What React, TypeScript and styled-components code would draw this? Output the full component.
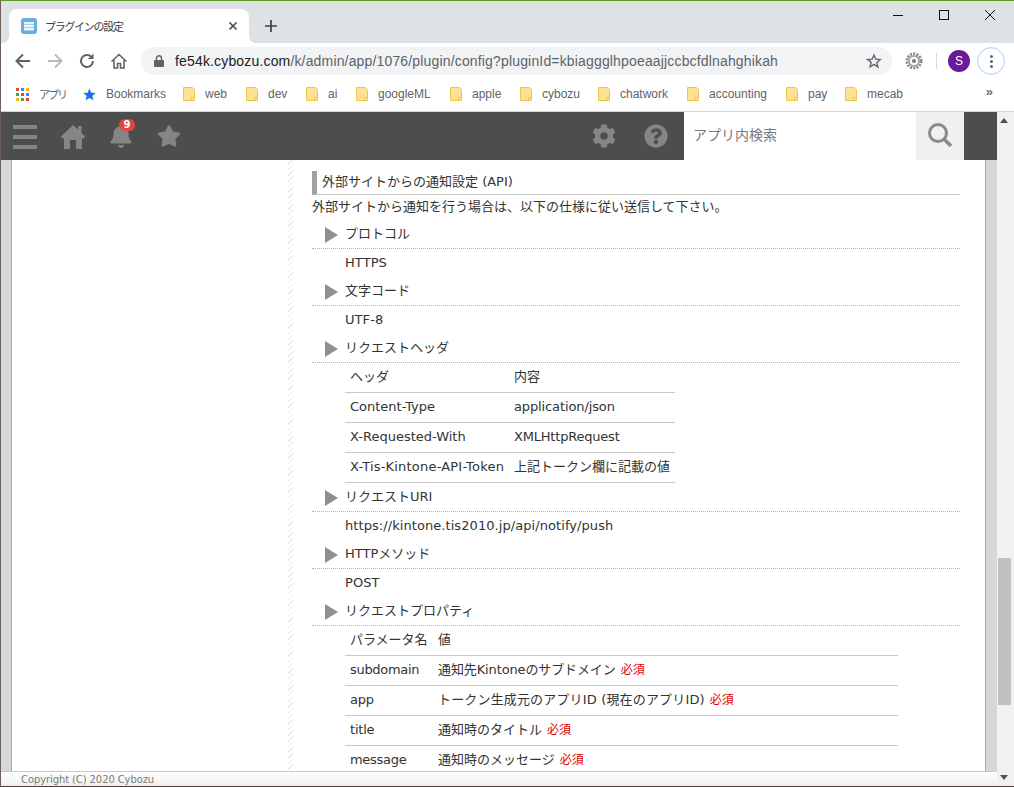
import * as React from 'react'
import styled, {createGlobalStyle} from 'styled-components'
import {FaBell, FaCog, FaQuestionCircle, FaStar} from 'react-icons/fa'

const GlobalStyle = createGlobalStyle`
  html, body {
    margin: 0;
    padding: 0;
    height: 100%;
    overflow: hidden;
    background: #fff;
  }
  * {
    box-sizing: border-box;
  }
`

const uiFont = `"Liberation Sans", "Noto Sans CJK JP", sans-serif`
const pageFont = `"DejaVu Sans", "Noto Sans CJK JP", sans-serif`

const Window = styled.div`
  width: 1014px;
  height: 787px;
  display: flex;
  flex-direction: column;
  overflow: hidden;
  border-top: 1px solid #5c9a1e;
  border-left: 1px solid #6e5f58;
  border-bottom: 1px solid #4a3f3c;
  font-family: ${uiFont};
`

const TabStrip = styled.div`
  height: 42px;
  flex: none;
  display: flex;
  align-items: flex-end;
  padding: 0 1px 0 8px;
  background: #dee1e6;
`

const Tab = styled.div`
  position: relative;
  width: 240px;
  height: 34px;
  display: flex;
  align-items: center;
  padding: 0 10px 0 12px;
  background: #fff;
  border-radius: 8px 8px 0 0;
  font-size: 12px;
  color: #3c4043;

  &::before,
  &::after {
    content: '';
    position: absolute;
    bottom: 0;
    width: 6px;
    height: 6px;
  }
  &::before {
    left: -6px;
    background: radial-gradient(circle at 0 0, transparent 5.5px, #fff 6px);
  }
  &::after {
    right: -6px;
    background: radial-gradient(circle at 100% 0, transparent 5.5px, #fff 6px);
  }
`

const TabIcon = styled.svg`
  width: 16px;
  height: 16px;
  margin-right: 8px;
  flex: none;
`

const TabTitle = styled.span`
  flex: 1;
  font-size: 11px;
  letter-spacing: -1.3px;
`

const TabClose = styled.svg`
  width: 10px;
  height: 10px;
  margin-right: 1px;
`

const NewTab = styled.svg`
  width: 12px;
  height: 12px;
  margin: 0 0 11px 16px;
`

const WindowButtons = styled.div`
  margin-left: auto;
  align-self: flex-start;
  display: flex;
`

const WindowButton = styled.svg`
  width: 46px;
  height: 29px;
`

const Toolbar = styled.div`
  height: 32px;
  flex: none;
  display: flex;
  align-items: center;
  background: #fff;
  padding: 4px 0 0 13px;
`

const NavIcon = styled.svg`
  width: 18px;
  height: 18px;
  margin-right: 14px;
  flex: none;
`

const Omnibox = styled.div`
  width: 751px;
  height: 28px;
  margin-left: -1px;
  display: flex;
  align-items: center;
  padding: 0 10px 0 13px;
  background: #f1f3f4;
  border-radius: 14px;
  font-size: 14px;
  color: #5f6368;
  letter-spacing: 0.16px;
`

const LockIcon = styled.svg`
  width: 10px;
  height: 12px;
  margin-right: 11px;
  flex: none;
`

const Url = styled.span`
  flex: 1;
`

const UrlHost = styled.span`
  color: #202124;
`

const StarIcon = styled.svg`
  width: 16px;
  height: 16px;
`

const ExtIcon = styled.svg`
  width: 18px;
  height: 18px;
  margin-left: 13px;
  flex: none;
`

const Divider = styled.div`
  width: 1px;
  height: 16px;
  margin-left: 13px;
  background: #d7d9dc;
`

const Avatar = styled.div`
  width: 22px;
  height: 22px;
  margin-left: 11px;
  border-radius: 50%;
  background: #6a1b9a;
  color: #fff;
  font-size: 12px;
  display: flex;
  align-items: center;
  justify-content: center;
`

const MenuButton = styled.div`
  width: 28px;
  height: 28px;
  margin-left: 7px;
  border: 1px solid #bcd6f7;
  box-shadow: inset 0 0 0 0.5px #d8e6fa;
  border-radius: 50%;
  display: flex;
  flex-direction: column;
  align-items: center;
  justify-content: center;
  gap: 2px;
`

const MenuDot = styled.span`
  width: 3px;
  height: 3px;
  border-radius: 50%;
  background: #5f6368;
`

const BookmarkBar = styled.div`
  height: 37px;
  flex: none;
  display: flex;
  align-items: center;
  padding-top: 2px;
  background: #fff;
  border-bottom: 1px solid #d0d2d4;
  font-size: 12px;
  color: #5f6368;
`

const Bookmark = styled.div<{$width: number}>`
  width: ${p => p.$width}px;
  flex: none;
  display: flex;
  align-items: center;
  gap: 10px;
  white-space: nowrap;
`

const AppsLabel = styled.span`
  font-size: 11px;
  letter-spacing: -2px;
`

const AppsGrid = styled.svg`
  width: 13px;
  height: 13px;
  margin-left: 15px;
  flex: none;
`

const BookmarkStar = styled.svg`
  width: 13px;
  height: 13px;
  flex: none;
`

const FolderIcon = styled.svg`
  width: 12px;
  height: 14px;
  flex: none;
`

const Chevrons = styled.span`
  margin-left: auto;
  padding: 0 21px 6px 0;
  font-size: 13px;
  font-weight: bold;
  color: #6a6d70;
`

const Body = styled.div`
  flex: 1;
  min-height: 0;
  display: flex;
`

const Page = styled.div`
  width: 996px;
  display: flex;
  flex-direction: column;
`

const AppHeader = styled.div`
  height: 48px;
  flex: none;
  display: flex;
  align-items: center;
  background: #4d4d4d;
  color: #858585;
`

const Hamburger = styled.div`
  width: 24px;
  height: 24px;
  margin: 2px 0 0 12px;
  display: flex;
  flex-direction: column;
  justify-content: space-between;
`

const HamburgerBar = styled.span`
  height: 4px;
  background: #858585;
`

const HeaderIcon = styled.span<{$left: number}>`
  position: relative;
  display: flex;
  margin-left: ${p => p.$left}px;
  font-size: 24px;
`

const HomeIcon = styled.svg`
  width: 24px;
  height: 24px;
  margin-top: 2px;
  fill: #858585;
`

const Badge = styled.span`
  position: absolute;
  top: -5px;
  left: 10px;
  width: 16px;
  height: 12px;
  border-radius: 6px;
  background: #e8463c;
  color: #fff;
  font: bold 10px/12px "DejaVu Sans", sans-serif;
  text-align: center;
`

const Search = styled.div`
  width: 232px;
  height: 48px;
  margin-left: 16px;
  display: flex;
  align-items: center;
  padding: 0 0 5px 9px;
  background: #fff;
  font: 14px ${pageFont};
  color: #7a7a7a;
`

const SearchButton = styled.div`
  width: 48px;
  height: 48px;
  display: flex;
  align-items: center;
  justify-content: center;
  background: #f0f0f0;
`

const SearchGlyph = styled.svg`
  width: 24px;
  height: 24px;
  margin-bottom: 2px;
`

const Content = styled.div`
  flex: 1;
  min-height: 0;
  display: flex;
  overflow: hidden;
  background: #d6d7d9;
  padding: 0 11px 0 10px;
`

const Panel = styled.div`
  flex: 1;
  display: flex;
  background: #fff;
  border-left: 1px solid #a9a9a9;
  border-right: 1px solid #a9a9a9;
  overflow: hidden;
`

const Sidebar = styled.div`
  width: 276px;
  flex: none;
`

const Hatch = styled.div`
  width: 5px;
  flex: none;
  background: repeating-linear-gradient(-45deg, #e9e9e9 0 1px, #fff 1px 4px);
`

const Main = styled.div`
  width: 648px;
  margin-left: 19px;
  flex: none;
  padding-top: 11px;
  font: 13px/18px ${pageFont};
  color: #333;
`

const Title = styled.div`
  height: 24px;
  display: flex;
  align-items: center;
  padding: 0 0 2px 5px;
  border-left: 5px solid #a0a0a0;
  border-bottom: 1px solid #c9c9c4;
`

const Intro = styled.div`
  height: 25px;
  line-height: 24px;
`

const SectionHead = styled.div`
  height: 29px;
  display: flex;
  align-items: center;
  padding: 0 0 1px 13px;
  border-bottom: 1px dotted #b5b5b5;
`

const Arrow = styled.span`
  width: 0;
  height: 0;
  margin: 2px 7px 0 0;
  border-style: solid;
  border-width: 8px 0 8px 13px;
  border-color: transparent transparent transparent #8f8f8f;
`

const Value = styled.div`
  height: 28px;
  line-height: 28px;
  padding-left: 33px;
  letter-spacing: 0.07px;
`

const Table = styled.table<{$width: number}>`
  width: ${p => p.$width}px;
  margin-left: 33px;
  border-collapse: separate;
  border-spacing: 0;
  table-layout: fixed;
`

const Cell = styled.td<{$track?: number}>`
  height: 30px;
  padding: 0 0 1px 5px;
  border-bottom: 1px solid #c8c8c8;
  white-space: nowrap;
  letter-spacing: ${p => p.$track ?? 0}px;
`

const Required = styled.span`
  margin-left: 5px;
  font-size: 12px;
  letter-spacing: 0;
  color: #e00000;
`

const Footer = styled.div`
  height: 15px;
  flex: none;
  padding-left: 20px;
  border-top: 1px solid #c9c9c9;
  background: linear-gradient(#fff, #efefef);
  font: 10px/16px ${pageFont};
  letter-spacing: -0.1px;
  color: #7b7b7b;
`

const Scrollbar = styled.div`
  width: 17px;
  flex: none;
  display: flex;
  flex-direction: column;
  align-items: center;
  background: #f1f1f1;
`

const ScrollArrow = styled.span<{$down?: boolean}>`
  width: 0;
  height: 0;
  margin: ${p => (p.$down ? '0 3px 0 0' : '6px 3px 0 0')};
  border-style: solid;
  border-width: ${p => (p.$down ? '5px 4px 0' : '0 4px 5px')};
  border-color: ${p =>
    p.$down ? '#505050 transparent transparent' : 'transparent transparent #505050'};
`

const ScrollThumb = styled.div`
  width: 13px;
  height: 147px;
  margin: 435px 3px auto 0;
  background: #c1c1c1;
`

const ScrollEnd = styled.div`
  height: 6px;
`

const folders: Array<[string, number]> = [
  ['web', 63],
  ['dev', 60],
  ['ai', 50],
  ['googleML', 94],
  ['apple', 70],
  ['cybozu', 78],
  ['chatwork', 89],
  ['accounting', 99],
  ['pay', 59],
  ['mecab', 100],
]

const Folder = () => (
  <FolderIcon viewBox="0 0 12 14">
    <path d="M.5.5h9l2 2v11H.5z" fill="#fde293" stroke="#f0c648" />
    <path d="M8.5 13.5v-3h3" fill="none" stroke="#f0c648" />
  </FolderIcon>
)

const Section = ({title, children}: {title: string; children: React.ReactNode}) => (
  <>
    <SectionHead>
      <Arrow />
      {title}
    </SectionHead>
    {children}
  </>
)

// name, value, then the letter spacing each needs to land on the same width
const headerRows: Array<[string, string, number, number]> = [
  ['Content-Type', 'application/json', 0, -0.12],
  ['X-Requested-With', 'XMLHttpRequest', 0, -0.2],
  ['X-Tis-Kintone-API-Token', '上記トークン欄に記載の値', 0.2, 0],
]

const propRows: Array<[string, string, number, number]> = [
  ['subdomain', '通知先Kintoneのサブドメイン', -0.3, -0.12],
  ['app', 'トークン生成元のアプリID (現在のアプリID)', -0.2, 0.16],
  ['title', '通知時のタイトル', -0.2, 0],
  ['message', '通知時のメッセージ', -0.3, 0],
]

export default function App() {
  return (
    <Window>
      <GlobalStyle />
      <TabStrip>
        <Tab>
          <TabIcon viewBox="0 0 16 16">
            <rect width="16" height="16" rx="3" fill="#6aaede" />
            <path d="M3 4h10v2.4H3zM3 7h10v2.4H3zM3 10h10v2.4H3z" fill="#fff" opacity=".85" />
          </TabIcon>
          <TabTitle>プラグインの設定</TabTitle>
          <TabClose viewBox="0 0 10 10">
            <path d="M1.5 1.5l7 7M8.5 1.5l-7 7" stroke="#45484c" strokeWidth="1.6" />
          </TabClose>
        </Tab>
        <NewTab viewBox="0 0 12 12">
          <path d="M6 0v12M0 6h12" stroke="#3c4043" strokeWidth="1.7" />
        </NewTab>
        <WindowButtons>
          <WindowButton viewBox="0 0 46 29">
            <path d="M18 14.5h10" stroke="#111" />
          </WindowButton>
          <WindowButton viewBox="0 0 46 29">
            <rect x="18.5" y="9.5" width="9" height="9" fill="none" stroke="#111" />
          </WindowButton>
          <WindowButton viewBox="0 0 46 29">
            <path d="M18 9l10 10M28 9L18 19" stroke="#111" />
          </WindowButton>
        </WindowButtons>
      </TabStrip>
      <Toolbar>
        <NavIcon viewBox="0 0 18 18">
          <path d="M16 9H3M9 2.5L2.5 9 9 15.5" fill="none" stroke="#5f6368" strokeWidth="2" />
        </NavIcon>
        <NavIcon viewBox="0 0 18 18">
          <path d="M2 9h13M9 2.5L15.5 9 9 15.5" fill="none" stroke="#b8babc" strokeWidth="2" />
        </NavIcon>
        <NavIcon viewBox="0 0 18 18">
          <path d="M15 9a6 6 0 1 1-1.8-4.3" fill="none" stroke="#5f6368" strokeWidth="2" />
          <path d="M15.5 1.5v5.6H9.900z" fill="#5f6368" />
        </NavIcon>
        <NavIcon viewBox="0 0 18 18">
          <path d="M1.500 9.500L9 2.500l7.500 7M4 8v8h3.500v-4.500h3V16H14V8" fill="none" stroke="#5f6368" strokeWidth="1.600" />
        </NavIcon>
        <Omnibox>
          <LockIcon viewBox="0 0 10 12">
            <path d="M2.500 5V3.300a2.500 2.500 0 0 1 5 0V5" fill="none" stroke="#5f6368" strokeWidth="1.400" />
            <rect y="5" width="10" height="7" rx="1" fill="#5f6368" />
          </LockIcon>
          <Url>
            <UrlHost>fe54k.cybozu.com</UrlHost>/k/admin/app/1076/plugin/config?pluginId=kbiaggglhpoeaajjccbcfdlnahghikah
          </Url>
          <StarIcon viewBox="0 0 24 24">
            <path d="M12 3l2.700 6.300 6.800.6-5.200 4.500 1.600 6.700L12 17l-5.900 3.600 1.600-6.700L2.500 9.900l6.800-.6z" fill="none" stroke="#5f6368" strokeWidth="2" />
          </StarIcon>
        </Omnibox>
        <ExtIcon viewBox="0 0 18 18">
          <circle cx="9" cy="9" r="7" fill="none" stroke="#8a8a8a" strokeWidth="3" strokeDasharray="2 1.200" />
          <circle cx="9" cy="9" r="5" fill="none" stroke="#a8a8a8" strokeWidth="2" />
          <circle cx="9" cy="9" r="2" fill="#777" />
        </ExtIcon>
        <Divider />
        <Avatar>S</Avatar>
        <MenuButton>
          <MenuDot />
          <MenuDot />
          <MenuDot />
        </MenuButton>
      </Toolbar>
      <BookmarkBar>
        <Bookmark $width={82}>
          <AppsGrid viewBox="0 0 13 13">
            <path d="M0 0h3v3H0z" fill="#ea4335" />
            <path d="M5 0h3v3H5z" fill="#4285f4" />
            <path d="M10 0h3v3h-3z" fill="#fbbc04" />
            <path d="M0 5h3v3H0z" fill="#34a853" />
            <path d="M5 5h3v3H5z" fill="#ea4335" />
            <path d="M10 5h3v3h-3z" fill="#4285f4" />
            <path d="M0 10h3v3H0z" fill="#fbbc04" />
            <path d="M5 10h3v3H5z" fill="#34a853" />
            <path d="M10 10h3v3h-3z" fill="#ea4335" />
          </AppsGrid>
          <AppsLabel>アプリ</AppsLabel>
        </Bookmark>
        <Bookmark $width={100}>
          <BookmarkStar viewBox="0 0 24 24">
            <path d="M12 1l3.300 7.600 8.200.7-6.200 5.400 1.900 8L12 18.500 4.800 22.700l1.900-8L.5 9.300l8.200-.7z" fill="#1a73e8" />
          </BookmarkStar>
          Bookmarks
        </Bookmark>
        {folders.map(([name, width]) => (
          <Bookmark key={name} $width={width}>
            <Folder />
            {name}
          </Bookmark>
        ))}
        <Chevrons>»</Chevrons>
      </BookmarkBar>
      <Body>
        <Page>
          <AppHeader>
            <Hamburger>
              <HamburgerBar />
              <HamburgerBar />
              <HamburgerBar />
            </Hamburger>
            <HeaderIcon $left={24}>
              <HomeIcon viewBox="0 0 24 24">
                <path d="M12 0l5 4.500V1h3.500v7L24 11.500 22.500 13.500H21V24h-6v-9H9v9H3V13.500H1.500L0 11.500z" />
              </HomeIcon>
            </HeaderIcon>
            <HeaderIcon $left={24}>
              <FaBell />
              <Badge>9</Badge>
            </HeaderIcon>
            <HeaderIcon $left={24}>
              <FaStar />
            </HeaderIcon>
            <HeaderIcon $left={411}>
              <FaCog />
            </HeaderIcon>
            <HeaderIcon $left={28}>
              <FaQuestionCircle />
            </HeaderIcon>
            <Search>アプリ内検索</Search>
            <SearchButton>
              <SearchGlyph viewBox="0 0 24 24">
                <circle cx="10" cy="10" r="8.500" fill="none" stroke="#8a8a8a" strokeWidth="3" />
                <path d="M16 16l7 7" stroke="#8a8a8a" strokeWidth="3.500" />
              </SearchGlyph>
            </SearchButton>
          </AppHeader>
          <Content>
            <Panel>
              <Sidebar />
              <Hatch />
              <Main>
                <Title>外部サイトからの通知設定 (API)</Title>
                <Intro>外部サイトから通知を行う場合は、以下の仕様に従い送信して下さい。</Intro>
                <Section title="プロトコル">
                  <Value>HTTPS</Value>
                </Section>
                <Section title="文字コード">
                  <Value>UTF-8</Value>
                </Section>
                <Section title="リクエストヘッダ">
                  <Table $width={330}>
                    <colgroup>
                      <col width={164} />
                      <col />
                    </colgroup>
                    <tbody>
                      <tr>
                        <Cell>ヘッダ</Cell>
                        <Cell>内容</Cell>
                      </tr>
                      {headerRows.map(([k, v, keyTrack, valueTrack]) => (
                        <tr key={k}>
                          <Cell $track={keyTrack}>{k}</Cell>
                          <Cell $track={valueTrack}>{v}</Cell>
                        </tr>
                      ))}
                    </tbody>
                  </Table>
                </Section>
                <Section title="リクエストURI">
                  <Value>https://kintone.tis2010.jp/api/notify/push</Value>
                </Section>
                <Section title="HTTPメソッド">
                  <Value>POST</Value>
                </Section>
                <Section title="リクエストプロパティ">
                  <Table $width={553}>
                    <colgroup>
                      <col width={88} />
                      <col />
                    </colgroup>
                    <tbody>
                      <tr>
                        <Cell>パラメータ名</Cell>
                        <Cell>値</Cell>
                      </tr>
                      {propRows.map(([k, v, keyTrack, valueTrack]) => (
                        <tr key={k}>
                          <Cell $track={keyTrack}>{k}</Cell>
                          <Cell $track={valueTrack}>
                            {v}
                            <Required>必須</Required>
                          </Cell>
                        </tr>
                      ))}
                    </tbody>
                  </Table>
                </Section>
              </Main>
            </Panel>
          </Content>
          <Footer>Copyright (C) 2020 Cybozu</Footer>
        </Page>
        <Scrollbar>
          <ScrollArrow />
          <ScrollThumb />
          <ScrollArrow $down />
          <ScrollEnd />
        </Scrollbar>
      </Body>
    </Window>
  )
}
